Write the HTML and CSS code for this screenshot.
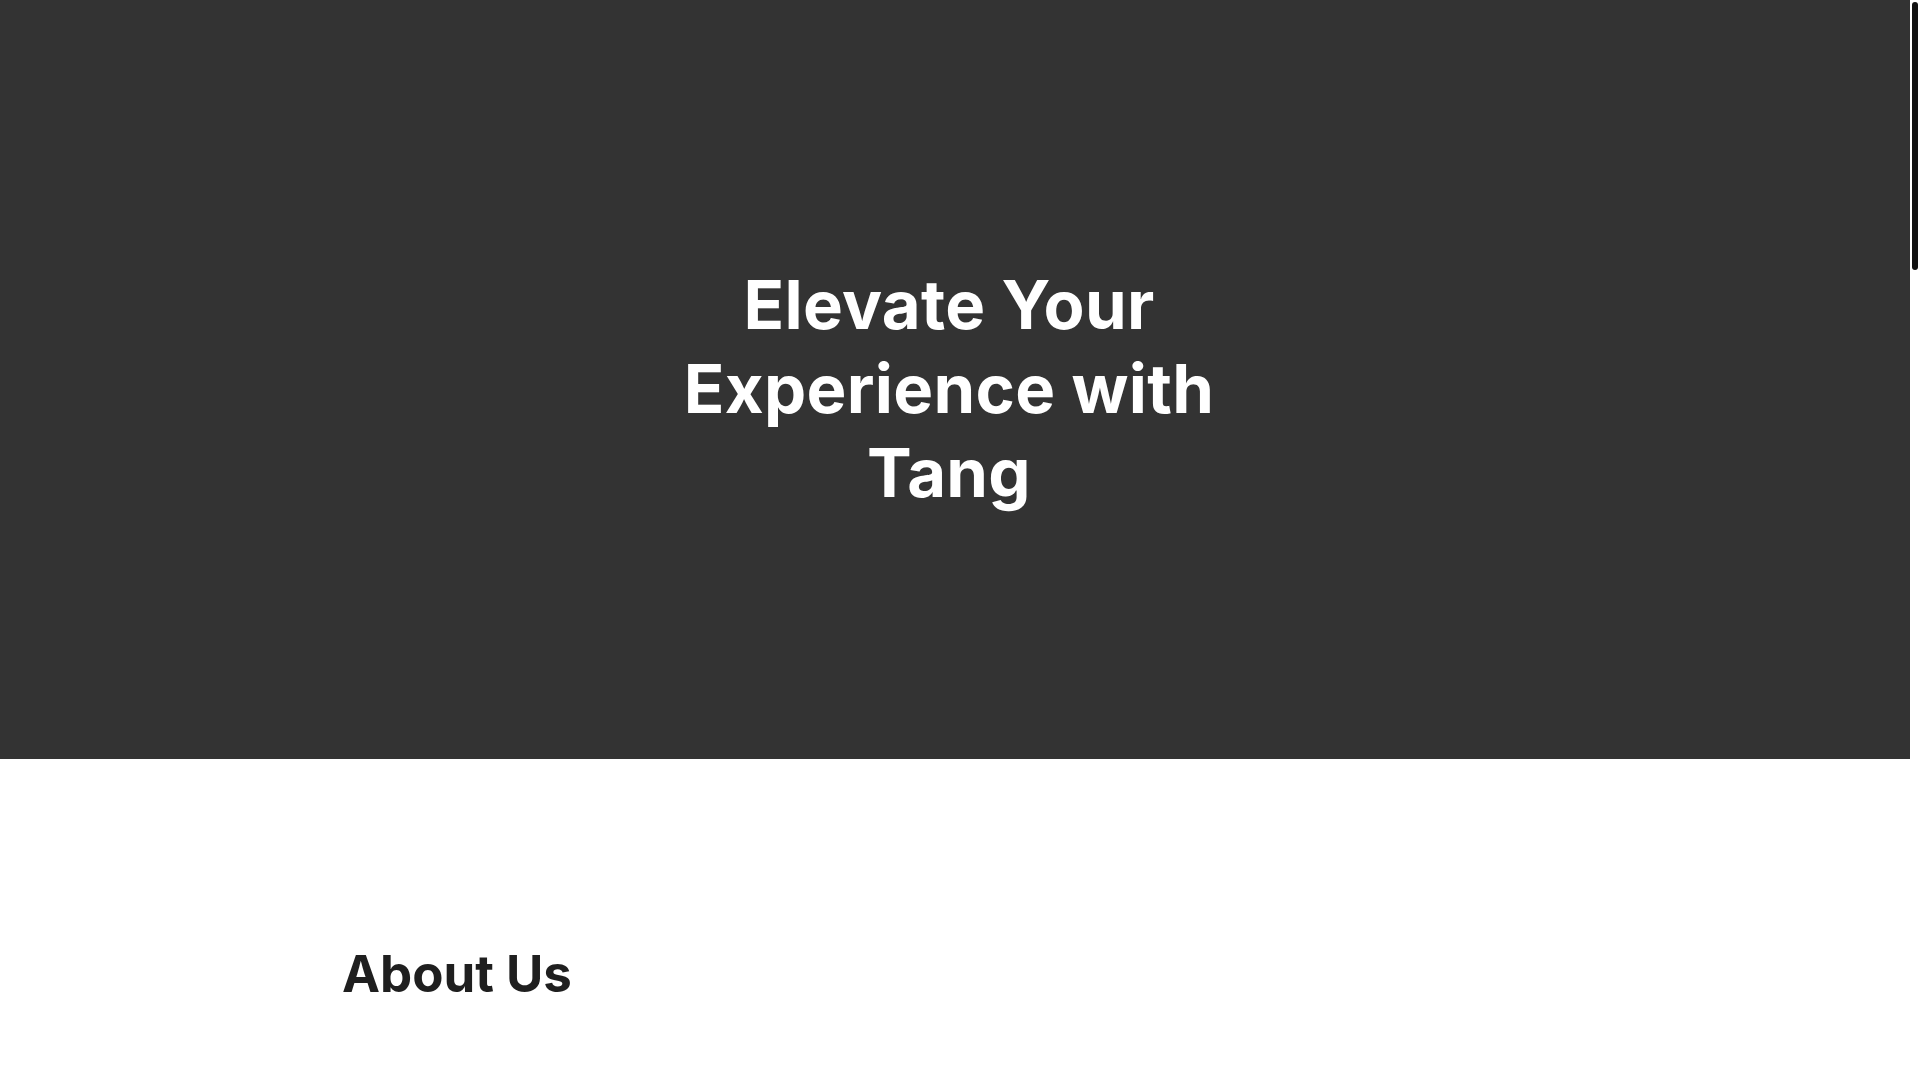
FILE: index.html
```html
<!DOCTYPE html>
<html lang="en">
<head>
<meta charset="utf-8">
<title>Tang</title>
<link rel="stylesheet" href="styles.css">
</head>
<body>
  <div class="page">
    <header class="hero">
      <h1 class="hero-title">Elevate Your Experience with Tang</h1>
    </header>
    <main>
      <section class="about">
        <div class="container">
          <h2 class="section-title">About Us</h2>
        </div>
      </section>
    </main>
  </div>
  <div class="scrollbar" aria-hidden="true">
    <div class="scrollbar-thumb"></div>
  </div>
</body>
</html>
```

FILE: styles.css
```css
html, body {
  margin: 0;
  padding: 0;
}

body {
  background: #ffffff;
  font-family: "Inter", "Open Sans", "DejaVu Sans", sans-serif;
  color: #222222;
}

.page {
  margin-right: 10px;
}

.scrollbar {
  position: fixed;
  top: 0;
  right: 0;
  width: 10px;
  height: 100vh;
  background: #ffffff;
}

.scrollbar-thumb {
  margin: 2px 2px 0;
  height: 268px;
  background: #111111;
  border-radius: 3px;
}

.hero {
  background: #333333;
  height: 759px;
  box-sizing: border-box;
  padding: 263px 32px 0 20px;
}

.hero-title {
  margin: 0 auto;
  max-width: 600px;
  text-align: center;
  color: #ffffff;
  font-weight: 700;
  font-size: 67px;
  line-height: 83.75px;
  letter-spacing: 0.3px;
}

.about {
  min-height: 3527px;
  box-sizing: border-box;
  padding-top: 184px;
}

.container {
  max-width: 1226px;
  margin: 0 auto;
}

.section-title {
  margin: 0;
  font-weight: 700;
  font-size: 51px;
  line-height: 1.2;
  color: #1f1f1f;
}
```
